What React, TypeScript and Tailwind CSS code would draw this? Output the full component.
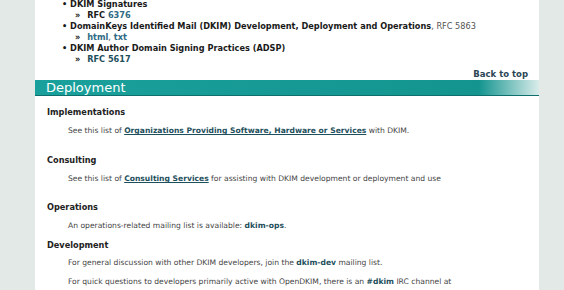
import React from "react";

const link = "font-bold text-[#1e4f5c] underline";
const chip = "font-bold text-[#1e4f5c]";

const Heading = ({ children, className = "" }: { children: React.ReactNode; className?: string }) => (
  <h3 className={`pl-[12px] font-bold text-[#222] text-[8.2px] leading-[12px] ${className}`}>{children}</h3>
);

const Para = ({ children, className = "" }: { children: React.ReactNode; className?: string }) => (
  <p className={`pl-[33px] text-[7.6px] leading-[12px] text-[#444] ${className}`}>{children}</p>
);

export default function App() {
  return (
    <div className="flex w-[564px] h-[290px] overflow-hidden bg-[#e3e9e6] font-['DejaVu_Sans',Verdana,sans-serif]">
      <div className="w-[35px] shrink-0" />
      <div className="w-[504px] shrink-0 bg-white">
        <ul className="-mt-[1px] pl-[27px] text-[8.2px] leading-[10.9px] text-[#1a1a1a]">
          <li>
            <div className="font-bold">• DKIM Signatures</div>
            <div className="pl-[13px] font-bold">
              <span className="mr-[4px]">»</span> RFC <span className="text-[#2e6a84]">6376</span>
            </div>
          </li>
          <li>
            <div>
              <span className="font-bold">• DomainKeys Identified Mail (DKIM) Development, Deployment and Operations</span>
              <span className="text-[#555]">, RFC 5863</span>
            </div>
            <div className="pl-[13px] font-bold">
              <span className="mr-[4px]">»</span> <span className="text-[#2e6a84]">html</span>
              <span className="font-normal text-[#555]">,</span> <span className="text-[#2e6a84]">txt</span>
            </div>
          </li>
          <li>
            <div className="font-bold">• DKIM Author Domain Signing Practices (ADSP)</div>
            <div className="pl-[13px] font-bold text-[#1e4f5c]">
              <span className="mr-[4px] text-[#1a1a1a]">»</span> RFC 5617
            </div>
          </li>
        </ul>

        <div className="mt-[5px] pr-[11px] text-right text-[8.5px] leading-[10px] font-bold text-[#2b4656]">
          Back to top
        </div>

        <div className="mt-[1px] h-[16px] flex items-center pl-[11px] border-b border-[#0e6f6c] bg-[linear-gradient(to_right,#1aa09c_0%,#13948f_88%,#d9ecea_100%)] text-white text-[13px] leading-[14px]">
          Deployment
        </div>

        <Heading className="mt-[10px]">Implementations</Heading>
        <Para className="mt-[7px]">
          See this list of <a className={link}>Organizations Providing Software, Hardware or Services</a> with DKIM.
        </Para>

        <Heading className="mt-[17px]">Consulting</Heading>
        <Para className="mt-[7px]">
          See this list of <a className={link}>Consulting Services</a> for assisting with DKIM development or deployment and use
        </Para>

        <Heading className="mt-[16px]">Operations</Heading>
        <Para className="mt-[7px]">
          An operations-related mailing list is available: <span className={chip}>dkim-ops</span>.
        </Para>

        <Heading className="mt-[7px]">Development</Heading>
        <Para className="mt-[6px]">
          For general discussion with other DKIM developers, join the <span className={chip}>dkim-dev</span> mailing list.
        </Para>
        <Para className="mt-[7px] w-[450px]">
          For quick questions to developers primarily active with OpenDKIM, there is an <span className={chip}>#dkim</span> IRC
          channel at efnet.org.
        </Para>
      </div>
      <div className="flex-1" />
    </div>
  );
}
